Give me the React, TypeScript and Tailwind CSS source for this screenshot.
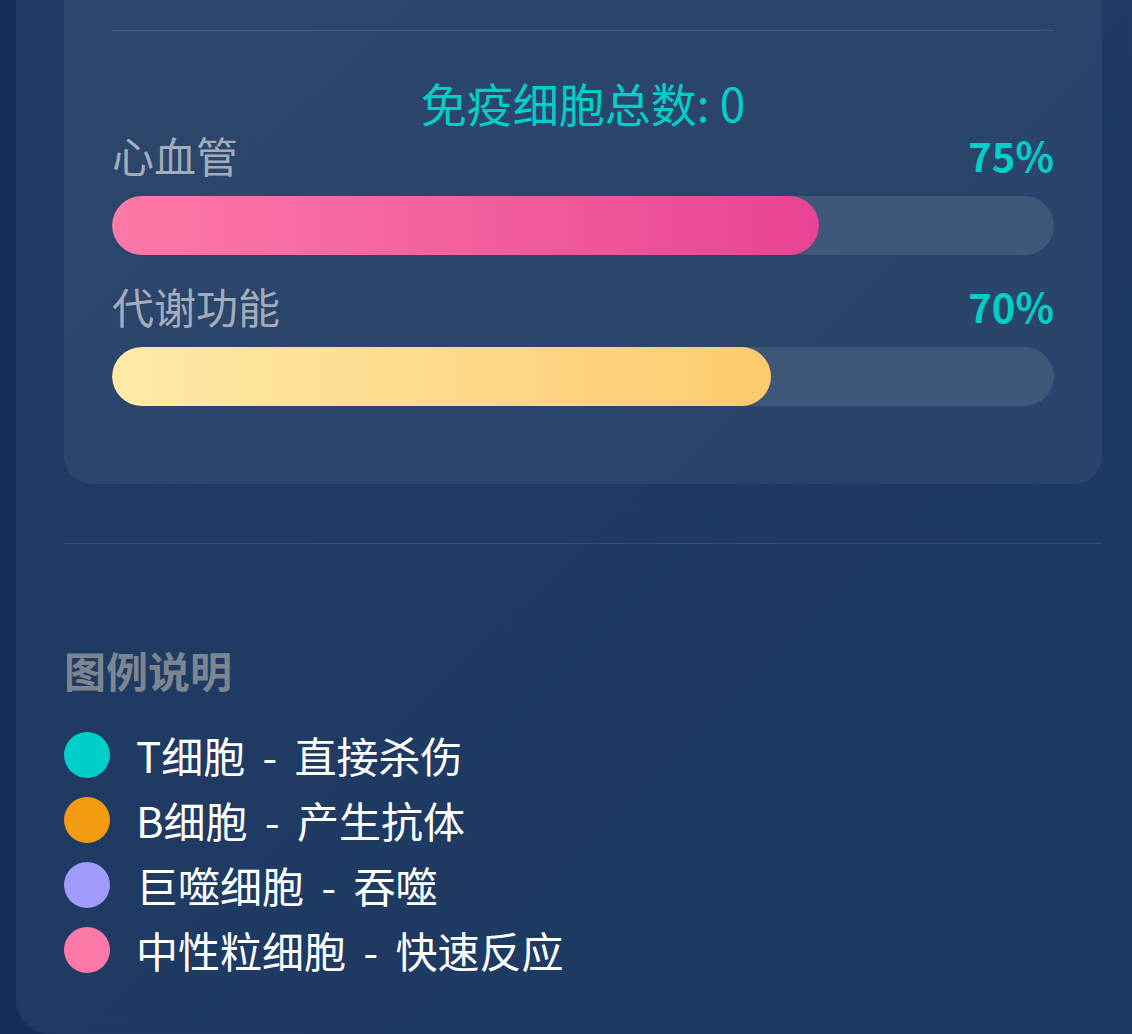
import React from 'react'

const metrics = [
  { label: '心血管', value: 75, bar: 'bg-gradient-to-r from-[#fd79a8] to-[#e84393]' },
  { label: '代谢功能', value: 70, bar: 'bg-gradient-to-r from-[#ffeaa7] to-[#fdcb6e]' },
]

const legend = [
  { color: 'bg-[#00cec9]', text: 'T细胞 - 直接杀伤' },
  { color: 'bg-[#f39c12]', text: 'B细胞 - 产生抗体' },
  { color: 'bg-[#a29bfe]', text: '巨噬细胞 - 吞噬' },
  { color: 'bg-[#fd79a8]', text: '中性粒细胞 - 快速反应' },
]

const font = { fontFamily: '"Noto Sans CJK SC", "Noto Sans", sans-serif' }

export default function App() {
  const totalCells = 0

  return (
    <div className="w-[1132px] h-[1034px] overflow-hidden bg-[#132e58] pl-[16px]" style={font}>
      <div className="-mt-[100px] w-[1160px] h-[1134px] rounded-bl-[34px] bg-gradient-to-br from-[#213c64] to-[#1d3a62] pt-[40px] px-[48px]">
        {/* organ health card */}
        <div className="w-[1038px] rounded-[28px] bg-white/5 pt-[90px] px-[48px] pb-[78px]">
          <div className="border-t border-white/10" />
          <div className="mt-[43px] text-center text-[46px] leading-[56px] text-[#00cec9]">
            免疫细胞总数: {totalCells}
          </div>

          {metrics.map((m, i) => (
            <div key={m.label} className={i === 0 ? '' : 'mt-[26px]'}>
              <div className="flex items-center justify-between h-[50px] leading-[50px]">
                <span className="text-[42px] text-[#a3acb8]">{m.label}</span>
                <span className="text-[40px] font-bold text-[#00cec9]">{m.value}%</span>
              </div>
              <div className="mt-[16px] h-[59px] rounded-full bg-white/10 overflow-hidden">
                <div className={`h-full rounded-full ${m.bar}`} style={{ width: `${m.value}%` }} />
              </div>
            </div>
          ))}
        </div>

        <div className="mt-[59px] w-[1038px] border-t border-white/10" />

        {/* legend */}
        <div className="mt-[98px]">
          <div className="text-[42px] leading-[56px] font-bold text-[#7c8590]">图例说明</div>
          <div className="mt-[24px] flex flex-col">
            {legend.map((l) => (
              <div key={l.text} className="flex items-center gap-[26px] h-[65px]">
                <span className={`w-[46px] h-[46px] rounded-full shrink-0 ${l.color}`} />
                <span className="text-[42px] leading-[65px] text-white [word-spacing:8px]">{l.text}</span>
              </div>
            ))}
          </div>
        </div>
      </div>
    </div>
  )
}
